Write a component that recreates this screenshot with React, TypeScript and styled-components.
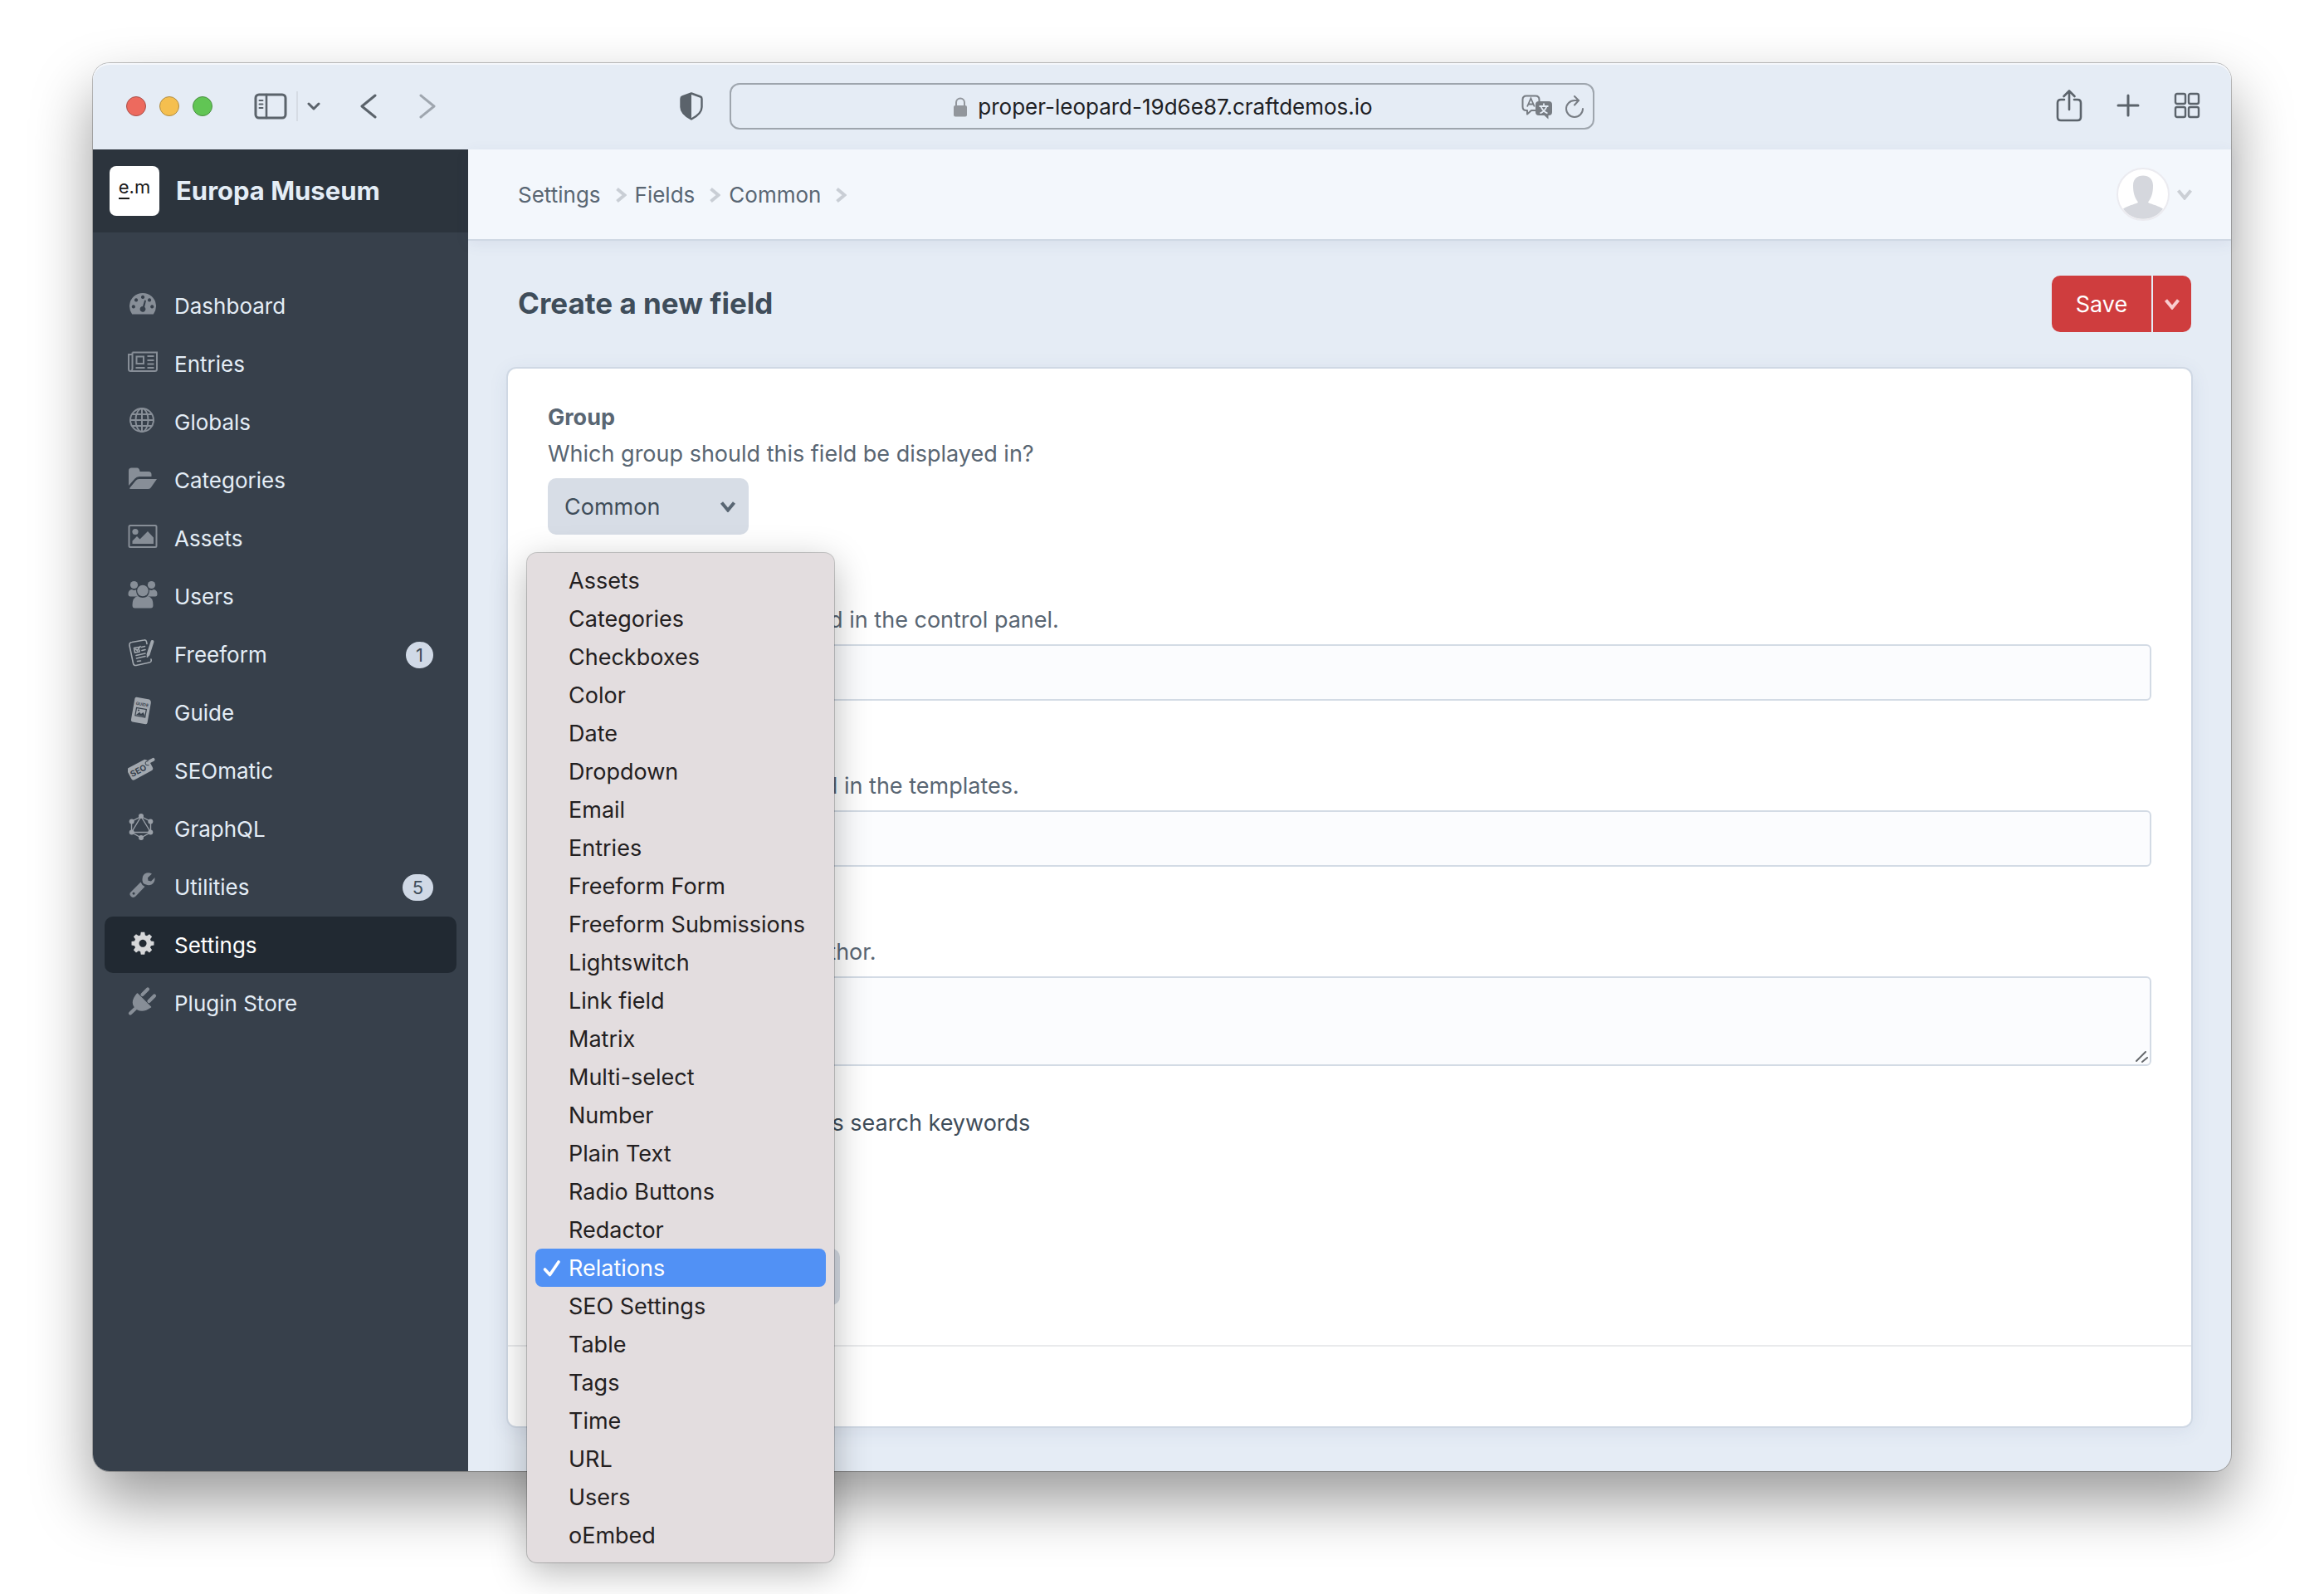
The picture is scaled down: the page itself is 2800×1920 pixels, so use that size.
import React from "react";
import styled, { createGlobalStyle, css } from "styled-components";

const color = {
  chrome: "#e5ecf5",
  chromeIcon: "#5b636b",
  sidebar: "#37404b",
  sidebarHeader: "#2c343d",
  sidebarActive: "#212932",
  canvas: "#e5ecf5",
  topbar: "#f3f7fc",
  hairline: "#cfd8e4",
  text: "#3f4d5a",
  muted: "#596673",
  fill: "#d7dde6",
  red: "#cf3d3e",
  menu: "#e3dddf",
  blue: "#5191f5",
};

const GlobalStyle = createGlobalStyle`
  *, *::before, *::after { box-sizing: border-box; }
  body {
    margin: 0;
    background: #ffffff;
    color: ${color.text};
    font-family: Inter, "Liberation Sans", sans-serif;
    font-size: 27px;
    line-height: 36px;
    -webkit-font-smoothing: antialiased;
  }
  button, input, select, textarea { font: inherit; color: inherit; }
  a { color: inherit; text-decoration: none; }
`;

/* ---------- window ---------- */

const Desktop = styled.div`
  padding: 76px 112px 148px;
`;

const Window = styled.div`
  border-radius: 20px;
  background: ${color.canvas};
  box-shadow: 0 0 0 1px rgba(0, 0, 0, 0.24), 0 36px 72px rgba(0, 0, 0, 0.4);
`;

const Toolbar = styled.header`
  display: grid;
  grid-template-columns: minmax(0, 1fr) minmax(0, 1042px) minmax(0, 1fr);
  align-items: center;
  height: 104px;
  border-radius: 20px 20px 0 0;
  background: ${color.chrome};
  box-shadow: inset 0 2px 0 rgba(255, 255, 255, 0.6);
  color: ${color.chromeIcon};
`;

const ToolbarStart = styled.div`
  display: flex;
  align-items: center;
  padding: 0 32px 0 40px;
`;

const ToolbarEnd = styled.div`
  display: flex;
  align-items: center;
  justify-content: flex-end;
  gap: 41px;
  padding: 0 37px 2px 0;
`;

const Lights = styled.div`
  display: flex;
  gap: 16px;
  margin-right: 50px;
`;

const Light = styled.button<{ $fill: string; $edge: string }>`
  width: 24px;
  height: 24px;
  padding: 0;
  border: 1px solid ${(p) => p.$edge};
  border-radius: 50%;
  background: ${(p) => p.$fill};
`;

const IconButton = styled.button<{ $dim?: boolean }>`
  display: flex;
  align-items: center;
  justify-content: center;
  padding: 0;
  border: 0;
  background: none;
  color: inherit;
  opacity: ${(p) => (p.$dim ? 0.5 : 1)};
  svg { display: block; }
`;

const SidebarToggle = styled.div`
  display: flex;
  align-items: center;
  gap: 11px;
  margin-right: 48px;
`;

const Divider = styled.span`
  width: 2px;
  height: 36px;
  background: #d6dce4;
`;

const History = styled.div`
  display: flex;
  gap: 51px;
  margin-right: auto;
`;

const AddressBar = styled.div`
  position: relative;
  display: flex;
  align-items: center;
  justify-content: center;
  gap: 12px;
  height: 56px;
  padding: 2px 0 0 2px;
  border: 2px solid #9ea5ad;
  border-radius: 12px;
  color: #1d2024;
  font-size: 26px;
`;

const AddressActions = styled.div`
  position: absolute;
  right: 10px;
  display: flex;
  align-items: center;
  gap: 14px;
  color: #777c83;
`;

const Body = styled.div`
  display: flex;
  align-items: stretch;
`;

/* ---------- sidebar ---------- */

const Sidebar = styled.aside`
  flex: 0 0 452px;
  border-radius: 0 0 0 20px;
  background: ${color.sidebar};
  color: #e4edf6;
`;

const Site = styled.a`
  display: flex;
  align-items: center;
  gap: 20px;
  height: 100px;
  padding: 0 20px;
  background: ${color.sidebarHeader};
  font-size: 31px;
  font-weight: 700;
`;

const Logo = styled.span`
  display: flex;
  justify-content: center;
  width: 60px;
  height: 60px;
  padding-top: 12px;
  border-radius: 8px;
  background: #ffffff;
  color: #1a1a1a;
  font-size: 22px;
  font-weight: 400;
  line-height: 26px;
`;

const LogoMark = styled.span`
  height: 28px;
  border-bottom: 2px solid currentColor;
`;

const Nav = styled.nav`
  padding: 54px 14px;
`;

const NavList = styled.ul`
  display: grid;
  gap: 2px;
  margin: 0;
  padding: 0;
  list-style: none;
`;

const NavLink = styled.a<{ $active?: boolean }>`
  display: flex;
  align-items: center;
  gap: 20px;
  height: 68px;
  padding: 2px 28px 0;
  border-radius: 10px;
  font-size: 26px;
  ${(p) =>
    p.$active &&
    css`
      background: ${color.sidebarActive};
      color: #ffffff;
    `}
`;

const NavIcon = styled.span<{ $active?: boolean }>`
  display: flex;
  width: 36px;
  height: 42px;
  color: ${(p) => (p.$active ? "#d6d7d9" : "#878e97")};
`;

const Badge = styled.span`
  margin-left: auto;
  padding: 0 12px;
  border-radius: 16px;
  background: #d0d9e6;
  color: ${color.text};
  font-size: 22px;
  line-height: 32px;
`;

/* ---------- main ---------- */

const Main = styled.main`
  flex: 1;
  min-width: 0;
`;

const Topbar = styled.div`
  position: relative;
  display: flex;
  align-items: center;
  justify-content: space-between;
  height: 110px;
  padding: 0 46px 0 60px;
  border-bottom: 2px solid ${color.hairline};
  background: ${color.topbar};
  box-shadow: 0 4px 16px rgba(63, 77, 130, 0.08);
`;

const Crumbs = styled.ol`
  display: flex;
  gap: 10px;
  margin: 0;
  padding: 2px 0 0;
  list-style: none;
  color: ${color.muted};
  font-size: 26px;
`;

const Crumb = styled.li`
  display: flex;
  align-items: center;
  gap: 17px;
  svg { color: #c9ced5; }
`;

const Account = styled.button`
  display: flex;
  align-items: center;
  gap: 8px;
  padding: 0;
  border: 0;
  background: none;
  color: #cbcfd5;
`;

const Content = styled.div`
  padding: 42px 48px 54px;
`;

const PageHeader = styled.div`
  display: flex;
  align-items: center;
  justify-content: space-between;
  margin-bottom: 44px;
  padding-left: 12px;
`;

const Title = styled.h1`
  margin: 0;
  padding-bottom: 2px;
  font-size: 35px;
  font-weight: 700;
  line-height: 44px;
`;

const ButtonGroup = styled.div`
  display: flex;
  gap: 2px;
`;

const SaveButton = styled.button`
  min-width: 120px;
  height: 68px;
  padding: 2px 28px 0;
  border: 0;
  border-radius: 10px 0 0 10px;
  background: ${color.red};
  color: #ffffff;
`;

const SaveMenuButton = styled.button`
  display: flex;
  align-items: center;
  justify-content: center;
  width: 46px;
  height: 68px;
  padding: 0;
  border: 0;
  border-radius: 0 10px 10px 0;
  background: ${color.red};
  color: #f9cdcf;
`;

const Pane = styled.form`
  border-radius: 10px;
  background: #ffffff;
  box-shadow: 0 0 0 2px ${color.hairline}, 0 4px 24px rgba(63, 77, 130, 0.1);
`;

const Fields = styled.div`
  display: grid;
  gap: 41px;
  padding: 41px 48px 48px;
`;

const FieldBox = styled.div`
  display: flex;
  flex-direction: column;
  align-items: flex-start;
`;

const Label = styled.label`
  margin-bottom: 8px;
  color: ${color.muted};
  font-weight: 700;
`;

const Instructions = styled.p`
  margin: 0 0 11px;
  color: ${color.muted};
`;

const inputSurface = css`
  display: block;
  width: 100%;
  padding: 12px 16px;
  border: 2px solid #d3dbe5;
  border-radius: 6px;
  outline: 0;
  background: #fbfcfe;
`;

const TextInput = styled.input`
  ${inputSurface}
  height: 68px;
`;

const TextAreaBox = styled.div`
  position: relative;
  width: 100%;
`;

const TextArea = styled.textarea`
  ${inputSurface}
  height: 108px;
  resize: none;
`;

const Grip = styled.svg`
  position: absolute;
  right: 2px;
  bottom: 2px;
`;

const SelectBox = styled.div<{ $width: number }>`
  position: relative;
  width: ${(p) => p.$width}px;
`;

const Select = styled.select`
  display: block;
  width: 100%;
  height: 68px;
  padding: 2px 44px 0 20px;
  border: 0;
  border-radius: 10px;
  background: ${color.fill};
  appearance: none;
`;

const SelectArrow = styled.span`
  position: absolute;
  top: 27px;
  right: 15px;
  display: flex;
  color: ${color.muted};
  pointer-events: none;
`;

const CheckRow = styled.label`
  display: flex;
  align-items: center;
  gap: 16px;
  padding-top: 9px;
  line-height: 38px;
`;

const Checkbox = styled.input`
  width: 28px;
  height: 28px;
  margin: 0;
`;

const TypeSettings = styled.div`
  padding: 48px;
  border-top: 2px solid #e9eaec;
`;

/* ---------- popup menu ---------- */

const Menu = styled.ul`
  position: absolute;
  z-index: 10;
  top: -838px;
  left: -25px;
  width: 370px;
  margin: 0;
  padding: 10px;
  border-radius: 12px;
  background: ${color.menu};
  box-shadow: 0 0 0 1px rgba(0, 0, 0, 0.2), 0 12px 44px rgba(0, 0, 0, 0.28);
  color: #232021;
  font-size: 27px;
  list-style: none;
`;

const MenuItem = styled.li<{ $selected: boolean }>`
  display: grid;
  grid-template-columns: 24px 1fr;
  align-items: center;
  gap: 8px;
  padding: 2px 8px 0;
  border-radius: 8px;
  line-height: 44px;
  white-space: nowrap;
  ${(p) =>
    p.$selected &&
    css`
      background: ${color.blue};
      color: #ffffff;
    `}
`;

const Tick = styled.span`
  display: flex;
`;

/* ---------- icons ---------- */

const Chevron = ({ dir = "down", w = 20, h = 14, stroke = 4 }: { dir?: "down" | "left" | "right"; w?: number; h?: number; stroke?: number }) => {
  const s = stroke / 2 + 0.5;
  const points =
    dir === "down"
      ? `${s},${s} ${w / 2},${h - s} ${w - s},${s}`
      : dir === "right"
        ? `${s},${s} ${w - s},${h / 2} ${s},${h - s}`
        : `${w - s},${s} ${s},${h / 2} ${w - s},${h - s}`;
  return (
    <svg width={w} height={h} fill="none" stroke="currentColor" strokeWidth={stroke} aria-hidden>
      <polyline points={points} strokeLinecap={stroke < 4 ? "round" : "butt"} strokeLinejoin={stroke < 4 ? "round" : "miter"} />
    </svg>
  );
};

const SidebarGlyph = () => (
  <svg width="40" height="32" viewBox="0 0 40 32" fill="none" stroke="currentColor" strokeLinecap="round">
    <rect x="2" y="2" width="36" height="28" rx="4" strokeWidth="3" />
    <path d="M15 2v28" strokeWidth="2.6" />
    <path d="M6.500 9h4M6.500 13.500h4M6.500 18h4" strokeWidth="2" />
  </svg>
);

const ShieldGlyph = () => (
  <svg width="28" height="34" viewBox="0 0 28 34">
    <path d="M14 1.500 25 5.500Q26.500 6 26.500 8V18Q26.500 26 14 32.500 1.500 26 1.500 18V8Q1.500 6 3 5.500Z" fill="none" stroke="currentColor" strokeWidth="2.400" strokeLinejoin="round" />
    <path d="M14 1.500V32.500Q1.500 26 1.500 18V8Q1.500 6 3 5.500Z" fill="currentColor" />
  </svg>
);

const LockGlyph = () => (
  <svg width="18" height="24" viewBox="0 0 18 24">
    <rect x="1" y="10" width="16" height="13.500" rx="2" fill="#92969c" />
    <path d="M4 11V6.500a5 5 0 0 1 10 0V11" fill="none" stroke="#92969c" strokeWidth="2" />
  </svg>
);

const TranslateGlyph = () => (
  <svg width="38" height="30" viewBox="0 0 38 30" fill="none">
    <path d="M18 19h-6l-5 4.500V19H6q-4.500 0-4.500-4.500V6Q1.500 1.500 6 1.500h11q4.500 0 4.500 4.500v2" stroke="currentColor" strokeWidth="2" strokeLinejoin="round" />
    <path d="m7 14.500 4.400-10 4.400 10M8.600 11.500h5.600" stroke="currentColor" strokeWidth="1.800" />
    <path d="M21 8h12q4 0 4 4v9q0 4-4 4h-.5v4.500L27.500 25H21q-4 0-4-4v-9q0-4 4-4Z" fill="currentColor" />
    <path d="M27 10.500v3M21.500 14h11M30.500 14q-2 6-8 8.500M23.500 14q2 6 8 8.500" stroke={color.chrome} strokeWidth="1.800" />
  </svg>
);

const ReloadGlyph = () => (
  <svg width="24" height="28" viewBox="0 0 24 28" fill="none" stroke="currentColor" strokeWidth="2" strokeLinecap="round" strokeLinejoin="round">
    <path d="M22 16a10 10 0 1 1-10-10h5" />
    <path d="m12 1 5 5-5 5.500" />
  </svg>
);

const ShareGlyph = () => (
  <svg width="32" height="40" viewBox="0 0 32 40" fill="none" stroke="currentColor" strokeWidth="2.600" strokeLinecap="round" strokeLinejoin="round">
    <path d="M10 13H6q-4 0-4 4v17q0 4 4 4h20q4 0 4-4V17q0-4-4-4h-4" />
    <path d="M16 25V3M9.500 9 16 2.500 22.500 9" />
  </svg>
);

const PlusGlyph = () => (
  <svg width="28" height="28" viewBox="0 0 28 28" fill="none" stroke="currentColor" strokeWidth="3" strokeLinecap="round">
    <path d="M14 2v24M2 14h24" />
  </svg>
);

const TabsGlyph = () => (
  <svg width="32" height="32" viewBox="0 0 32 32" fill="none" stroke="currentColor" strokeWidth="2.400">
    <rect x="2" y="2" width="12" height="12" rx="2" />
    <rect x="18" y="2" width="12" height="12" rx="2" />
    <rect x="2" y="18" width="12" height="12" rx="2" />
    <rect x="18" y="18" width="12" height="12" rx="2" />
  </svg>
);

const AvatarGlyph = () => (
  <svg width="64" height="64" viewBox="0 0 64 64">
    <circle cx="32" cy="32" r="31" fill="#ffffff" stroke="#ebebf0" strokeWidth="2" />
    <path d="M32 9.500c-7 0-12 4-12 12 0 9 2 15 6 20-1 2-10 3-18 8a29.500 29.500 0 0 0 48 0c-8-5-17-6-18-8 4-5 6-11 6-20 0-8-5-12-12-12Z" fill="#d5d7dd" />
  </svg>
);

const CheckGlyph = () => (
  <svg width="24" height="24" viewBox="0 0 24 24" fill="none" stroke="currentColor" strokeWidth="3.600" strokeLinecap="round" strokeLinejoin="round">
    <path d="m3.500 13 6 6.500L20 4" />
  </svg>
);

const glyphs: Record<string, React.ReactNode> = {
  Dashboard: (
    <path
      fillRule="evenodd"
      fill="currentColor"
      d="M5.200 30.500A16 16 0 1 1 30.800 30.500ZM18 7.800a2.100 2.100 0 1 0 .1 0ZM10 11.300a2.100 2.100 0 1 0 .1 0ZM26 11.300a2.100 2.100 0 1 0 .1 0ZM6.800 19.300a2.100 2.100 0 1 0 .1 0ZM29.200 19.300a2.100 2.100 0 1 0 .1 0ZM20.200 13.500 18 21a3.400 3.400 0 1 0 2.200.8L22 14Z"
    />
  ),
  Entries: (
    <g fill="none" stroke="currentColor" strokeWidth="2">
      <path d="M5.500 6.500h29.500v20q0 2.500-2.500 2.500H3.500Q1 29 1 26.500V9h4.500" />
      <path d="M5.500 6.500V26q0 2-1.500 3" />
      <path d="M10.500 11.500h8.500v8.500h-8.500ZM9.500 25h11M23.500 11h8M23.500 16h8M23.500 20.500h8M23.500 25h8" />
    </g>
  ),
  Globals: (
    <g fill="none" stroke="currentColor" strokeWidth="2">
      <circle cx="17" cy="18" r="14" />
      <ellipse cx="17" cy="18" rx="7.500" ry="14" />
      <path d="M17 4v28M3 18h28M5 11h24M5 25h24" />
    </g>
  ),
  Categories: (
    <g fill="currentColor">
      <path d="M1 27V9q0-3.500 3.500-3.500H11q3 0 3.500 4.500H25q3.500 0 3.500 3.500V16H14q-3.500 0-5.500 2.500Z" />
      <path d="M35 19 28 29Q27 31 24.500 31H3q-1.500 0-.5-1.500L9.500 21q1.500-2 4-2Z" />
    </g>
  ),
  Assets: (
    <g>
      <rect x="1.500" y="5" width="33" height="26" rx="1.500" fill="none" stroke="currentColor" strokeWidth="2" />
      <circle cx="9" cy="12.500" r="3.600" fill="currentColor" />
      <path d="M5.500 27v-3.500l5.500-5.500 3.500 3.500L24 12l7 7.500V27Z" fill="currentColor" />
    </g>
  ),
  Users: (
    <g fill="currentColor">
      <circle cx="7.500" cy="6.500" r="4.600" />
      <circle cx="28.500" cy="6.500" r="4.600" />
      <circle cx="18" cy="13.500" r="6.800" />
      <path d="M5 12q2 1.500 5 .5 0 5 3 8H3q-2.500 0-2.500-3 0-5 4.500-5.500ZM31 12q-2 1.500-5 .5 0 5-3 8h10q2.500 0 2.500-3 0-5-4.500-5.500Z" />
      <path d="M12 20q6 4 12 0 6.500 1.500 6.500 11 0 3.500-3 3.500h-19q-3 0-3-3.500Q5.500 21.500 12 20Z" />
    </g>
  ),
  Freeform: (
    <g fill="none" stroke="#a2a8af" strokeWidth="1.600" strokeLinecap="round">
      <path d="M23 7.500 22.500 5q-.5-2.500-3-2L5 5.500Q1.500 6 2 9.500L6.500 31q.5 3 3.500 2.500L26 30q3-.5 2-4" />
      <path d="M7.500 12.500 13 11.500M7.500 12.500l1 5.500 5.500-1v-2M9.500 14l2 1.500 3.500-5M16.500 11.500l4-1M17 15.500l4-1M10 21.500l11-2.500M10.500 25 21 22.500M11.500 28.500l4-.5" />
      <path d="M29.500 5 24.500 20.500" strokeWidth="4" />
      <path d="m23.500 23 1-2.500" strokeWidth="2" />
    </g>
  ),
  Guide: (
    <g transform="rotate(10 16 18)">
      <path d="M8 3h15.500q2.500 1 2.500 3.500V31q0 2-2 2H8q-2 0-2-2V5q0-2 2-2Z" fill="#a2a8af" />
      <text x="16" y="12" fontSize="5" fontWeight="700" textAnchor="middle" fill={color.sidebar}>GUIDE</text>
      <rect x="10" y="15.500" width="12" height="9.500" fill="none" stroke={color.sidebar} strokeWidth="1.200" />
      <path d="m11 24 3.500-4 2 2 2.500-2.500 3 4.500Z" fill={color.sidebar} />
      <circle cx="13" cy="18" r="1" fill={color.sidebar} />
    </g>
  ),
  SEOmatic: (
    <g transform="rotate(-28 16 18)">
      <path d="M3 10h22l3 3h6q2 0 2 2t-2 2h-5v6q0 3-3 3H3q-3 0-3-3V13q0-3 3-3Z" fill="#a2a8af" />
      <text x="12" y="22" fontSize="10" fontWeight="700" textAnchor="middle" fill={color.sidebar}>SEO</text>
      <path d="M28 13.500q-4-1-4.500 1.500t3 3.500" fill="none" stroke={color.sidebar} strokeWidth="1" />
    </g>
  ),
  GraphQL: (
    <g fill="none" stroke="#9aa0a8" strokeWidth="1.400">
      <path d="M16 5.500 27.500 11.500V24.500L16 31 4.500 24.500V11.500ZM16 5.500 27.500 24.500H4.500Z" />
      <g fill="#9aa0a8" stroke="none">
        <circle cx="16" cy="5" r="3" />
        <circle cx="27.300" cy="11.500" r="3" />
        <circle cx="27.300" cy="24.500" r="3" />
        <circle cx="16" cy="31" r="3" />
        <circle cx="4.700" cy="24.500" r="3" />
        <circle cx="4.700" cy="11.500" r="3" />
      </g>
    </g>
  ),
  Utilities: (
    <path
      fillRule="evenodd"
      fill="currentColor"
      d="M29 4.500 24 9.300l.5 3.500 3.500.7 4.500-4.500q.5 6-4 8.500-3.500 1.500-6.500 0-5-1-4.500-6.500Q17.500 5 22.500 3.500 26 2.800 29 4.500ZM15.500 14.500q1.500 4 5 5.500L9.500 31.500Q7 34 4 32 1 29 3.500 26.500ZM7 26.800a1.500 1.500 0 1 0 .1 0Z"
    />
  ),
  Settings: (
    <path
      fillRule="evenodd"
      fill="currentColor"
      d="M15.500 4h5l.7 4 2.300 1 3.400-2.400 3.500 3.500-2.400 3.400 1 2.300 4 .7v5l-4 .7-1 2.300 2.400 3.400-3.500 3.500-3.400-2.400-2.300 1-.7 4h-5l-.7-4-2.300-1-3.400 2.400-3.500-3.500 2.400-3.400-1-2.300-4-.7v-5l4-.7 1-2.300-2.400-3.400 3.500-3.500L12.500 9l2.300-1ZM18 14a5 5 0 1 0 .1 0Z"
      transform="matrix(.9 0 0 .9 1.800 1.200)"
    />
  ),
  "Plugin Store": (
    <g fill="none" stroke="currentColor" strokeLinecap="round">
      <path d="m17.500 10 6.500-6.500M25.500 18l6.500-6.500M3 32.500l8-7.500" strokeWidth="4.200" />
      <path d="M11.500 9 27.500 25q-9 6.500-16 2.500Q1.500 20.500 11.500 9Z" fill="currentColor" stroke="currentColor" strokeWidth="1.500" strokeLinejoin="round" />
    </g>
  ),
};

/* ---------- data ---------- */

const navItems: { label: string; badge?: number; active?: boolean }[] = [
  { label: "Dashboard" },
  { label: "Entries" },
  { label: "Globals" },
  { label: "Categories" },
  { label: "Assets" },
  { label: "Users" },
  { label: "Freeform", badge: 1 },
  { label: "Guide" },
  { label: "SEOmatic" },
  { label: "GraphQL" },
  { label: "Utilities", badge: 5 },
  { label: "Settings", active: true },
  { label: "Plugin Store" },
];

const fieldTypes = [
  "Assets", "Categories", "Checkboxes", "Color", "Date", "Dropdown", "Email", "Entries",
  "Freeform Form", "Freeform Submissions", "Lightswitch", "Link field", "Matrix",
  "Multi-select", "Number", "Plain Text", "Radio Buttons", "Redactor", "Relations",
  "SEO Settings", "Table", "Tags", "Time", "URL", "Users", "oEmbed",
];

const Field = ({ id, label, instructions, children }: { id: string; label: string; instructions: string; children: React.ReactNode }) => (
  <FieldBox>
    <Label htmlFor={id}>{label}</Label>
    <Instructions>{instructions}</Instructions>
    {children}
  </FieldBox>
);

export default function App() {
  return (
    <Desktop>
      <GlobalStyle />
      <Window>
        <Toolbar>
          <ToolbarStart>
            <Lights>
              <Light $fill="#ed6a5e" $edge="#a8504a" aria-label="Close" />
              <Light $fill="#f5bf4f" $edge="#b08d45" aria-label="Minimize" />
              <Light $fill="#61c554" $edge="#4a8f42" aria-label="Zoom" />
            </Lights>
            <SidebarToggle>
              <IconButton aria-label="Show sidebar"><SidebarGlyph /></IconButton>
              <Divider />
              <IconButton aria-label="Tab groups"><Chevron w={16} h={10} stroke={3} /></IconButton>
            </SidebarToggle>
            <History>
              <IconButton aria-label="Back"><Chevron dir="left" w={20} h={30} stroke={3} /></IconButton>
              <IconButton $dim aria-label="Forward"><Chevron dir="right" w={20} h={30} stroke={3} /></IconButton>
            </History>
            <IconButton aria-label="Privacy report"><ShieldGlyph /></IconButton>
          </ToolbarStart>
          <AddressBar>
            <LockGlyph />
            <span>proper-leopard-19d6e87.craftdemos.io</span>
            <AddressActions>
              <IconButton aria-label="Translate"><TranslateGlyph /></IconButton>
              <IconButton aria-label="Reload"><ReloadGlyph /></IconButton>
            </AddressActions>
          </AddressBar>
          <ToolbarEnd>
            <IconButton aria-label="Share"><ShareGlyph /></IconButton>
            <IconButton aria-label="New tab"><PlusGlyph /></IconButton>
            <IconButton aria-label="Tab overview"><TabsGlyph /></IconButton>
          </ToolbarEnd>
        </Toolbar>

        <Body>
          <Sidebar>
            <Site href="#">
              <Logo><LogoMark>e</LogoMark>.m</Logo>
              Europa Museum
            </Site>
            <Nav aria-label="Primary">
              <NavList>
                {navItems.map((item) => (
                  <li key={item.label}>
                    <NavLink href="#" $active={item.active}>
                      <NavIcon $active={item.active}>
                        <svg width="36" height="36" viewBox="0 0 36 36" aria-hidden>{glyphs[item.label]}</svg>
                      </NavIcon>
                      {item.label}
                      {item.badge && <Badge>{item.badge}</Badge>}
                    </NavLink>
                  </li>
                ))}
              </NavList>
            </Nav>
          </Sidebar>

          <Main>
            <Topbar>
              <Crumbs>
                {["Settings", "Fields", "Common"].map((name) => (
                  <Crumb key={name}>
                    <a href="#">{name}</a>
                    <Chevron dir="right" w={14} h={20} stroke={4} />
                  </Crumb>
                ))}
              </Crumbs>
              <Account type="button" aria-label="My account">
                <AvatarGlyph />
                <Chevron />
              </Account>
            </Topbar>

            <Content>
              <PageHeader>
                <Title>Create a new field</Title>
                <ButtonGroup>
                  <SaveButton type="submit" form="field-form">Save</SaveButton>
                  <SaveMenuButton type="button" aria-label="More save options"><Chevron /></SaveMenuButton>
                </ButtonGroup>
              </PageHeader>

              <Pane id="field-form">
                <Fields>
                  <Field id="group" label="Group" instructions="Which group should this field be displayed in?">
                    <SelectBox $width={242}>
                      <Select id="group" defaultValue="Common">
                        <option>Common</option>
                      </Select>
                      <SelectArrow><Chevron /></SelectArrow>
                    </SelectBox>
                  </Field>
                  <Field id="name" label="Name" instructions="What this field will be called in the control panel.">
                    <TextInput id="name" type="text" />
                  </Field>
                  <Field id="handle" label="Handle" instructions="How you’ll refer to this field in the templates.">
                    <TextInput id="handle" type="text" />
                  </Field>
                  <Field id="instructions" label="Default Instructions" instructions="Helper text to guide the author.">
                    <TextAreaBox>
                      <TextArea id="instructions" />
                      <Grip width="18" height="18" viewBox="0 0 18 18" fill="none" stroke="#66696d" strokeWidth="2" strokeLinecap="round" aria-hidden>
                        <path d="M2 14 13 3M9 15l6-5" />
                      </Grip>
                    </TextAreaBox>
                  </Field>
                  <CheckRow>
                    <Checkbox type="checkbox" />
                    Use this field’s values as search keywords
                  </CheckRow>
                  <Field id="type" label="Field Type" instructions="What type of field is this?">
                    <SelectBox $width={352}>
                      <Select id="type" defaultValue="Relations">
                        {fieldTypes.map((type) => (
                          <option key={type}>{type}</option>
                        ))}
                      </Select>
                      <SelectArrow><Chevron /></SelectArrow>
                      <Menu role="listbox" aria-label="Field Type">
                        {fieldTypes.map((type) => (
                          <MenuItem key={type} role="option" aria-selected={type === "Relations"} $selected={type === "Relations"}>
                            <Tick>{type === "Relations" && <CheckGlyph />}</Tick>
                            {type}
                          </MenuItem>
                        ))}
                      </Menu>
                    </SelectBox>
                  </Field>
                </Fields>
                <TypeSettings />
              </Pane>
            </Content>
          </Main>
        </Body>
      </Window>
    </Desktop>
  );
}
